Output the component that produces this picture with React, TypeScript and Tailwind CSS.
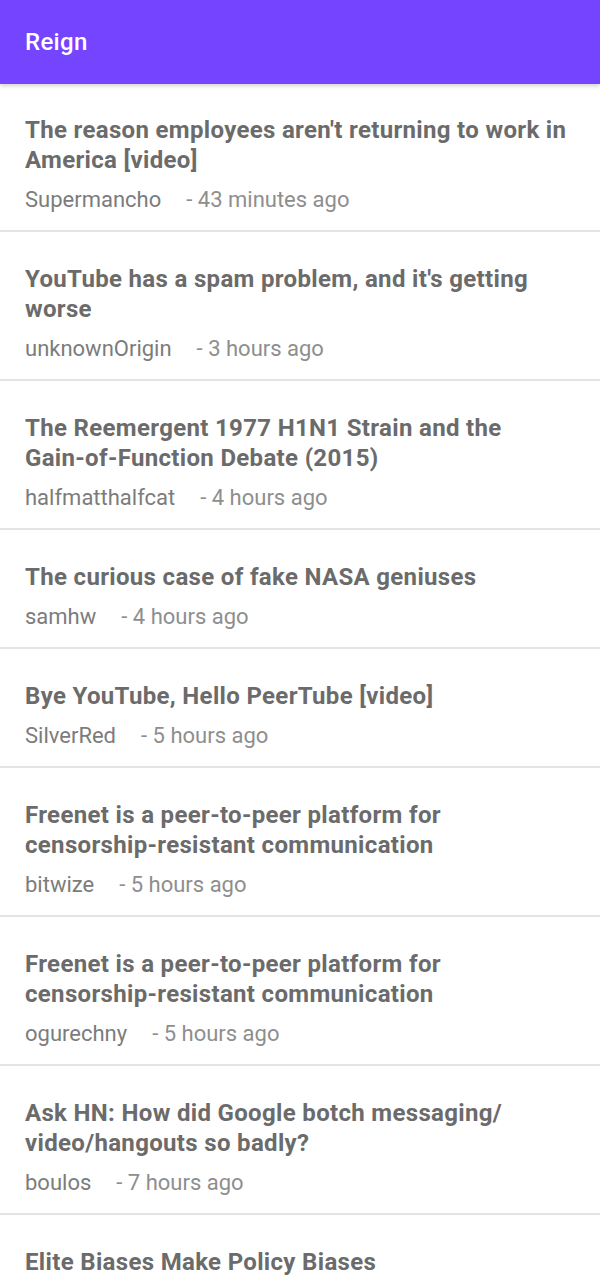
const stories = [
  { title: "The reason employees aren't returning to work in America [video]", author: "Supermancho", time: "43 minutes ago" },
  { title: "YouTube has a spam problem, and it's getting worse", author: "unknownOrigin", time: "3 hours ago" },
  { title: "The Reemergent 1977 H1N1 Strain and the Gain-of-Function Debate (2015)", author: "halfmatthalfcat", time: "4 hours ago" },
  { title: "The curious case of fake NASA geniuses", author: "samhw", time: "4 hours ago" },
  { title: "Bye YouTube, Hello PeerTube [video]", author: "SilverRed", time: "5 hours ago" },
  { title: "Freenet is a peer-to-peer platform for censorship-resistant communication", author: "bitwize", time: "5 hours ago" },
  { title: "Freenet is a peer-to-peer platform for censorship-resistant communication", author: "ogurechny", time: "5 hours ago" },
  { title: "Ask HN: How did Google botch messaging/\u200Bvideo/hangouts so badly?", author: "boulos", time: "7 hours ago" },
  { title: "Elite Biases Make Policy Biases", author: "", time: "" },
];

export default function App() {
  return (
    <div className="h-[1280px] overflow-hidden bg-white font-['Roboto',_'Noto_Sans',_sans-serif]">
      <header className="relative z-10 h-[84px] bg-[#7444ff] px-[25px] flex items-center shadow-[0_2px_4px_rgba(0,0,0,0.18)]">
        <h1 className="text-[24px] font-medium text-white tracking-[0.3px]">Reign</h1>
      </header>

      <ul>
        {stories.map((s, i) => (
          <li key={i} className="border-b-2 border-[#e4e4e4] px-[25px] pt-[32px] pb-[18px] first:pt-[31px]">
            <p className="text-[24px] leading-[30px] font-bold tracking-[0.33px] text-[#6b6b6b]">
              {s.title.split("-").join("\u2011")}
            </p>
            {s.author && (
              <p className="mt-[13px] text-[22px] leading-[24px] text-[#7c7c7c]">
                {s.author}
                <span className="ml-[25px] text-[#8e8e8e]">- {s.time}</span>
              </p>
            )}
          </li>
        ))}
      </ul>
    </div>
  );
}
